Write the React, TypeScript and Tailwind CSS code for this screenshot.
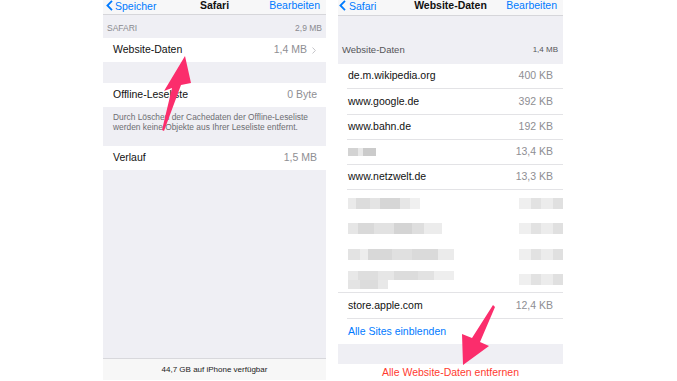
import React from "react";

const font = { fontFamily: '"Liberation Sans", Arial, sans-serif' };

type Block = [number, string];

function Chevron({ className }: { className?: string }) {
  return (
    <svg width="7" height="11" viewBox="0 0 7 11" className={className}>
      <polyline points="6,0.8 1.4,5.5 6,10.2" fill="none" stroke="#007aff" strokeWidth="1.8" />
    </svg>
  );
}

function Pixels({ blocks, h }: { blocks: Block[]; h: number }) {
  return (
    <div className="flex">
      {blocks.map(([w, c], i) => (
        <div key={i} style={{ width: w, height: h, background: c }} />
      ))}
    </div>
  );
}

function SafariPane() {
  return (
    <div className="flex h-[380px] w-[223px] flex-col bg-[#efeff4] text-[10.5px] text-[#111]">
      <div className="flex h-[15px] items-start justify-between border-b border-[#d6d6da] bg-[#f7f7f8] px-[3px] leading-[10px]">
        <div className="flex w-[70px] items-center gap-[2px] text-[#007aff]">
          <Chevron />
          <span>Speicher</span>
        </div>
        <span className="font-bold">Safari</span>
        <span className="w-[70px] pr-[3px] text-right text-[#007aff]">Bearbeiten</span>
      </div>

      <div className="flex h-[23px] items-end justify-between px-[4px] pb-[6px] text-[8.5px] leading-[8px] text-[#8a8a8f]">
        <span>SAFARI</span>
        <span>2,9 MB</span>
      </div>
      <div className="flex h-[24px] items-center justify-between bg-white pl-[10px] pr-[10px]">
        <span>Website-Daten</span>
        <span className="flex items-center gap-[5px] text-[#8e8e93]">
          1,4 MB
          <svg width="4" height="7" viewBox="0 0 4 7">
            <polyline points="0.5,0.5 3.4,3.5 0.5,6.5" fill="none" stroke="#c4c4c9" strokeWidth="1" />
          </svg>
        </span>
      </div>
      <div className="h-[21px]" />
      <div className="flex h-[24px] items-center justify-between bg-white pl-[10px] pr-[9px]">
        <span>Offline-Leseliste</span>
        <span className="text-[#8e8e93]">0 Byte</span>
      </div>
      <div className="h-[39px] px-[10px] pt-[5px] text-[8.4px] leading-[10px] text-[#6d6d72]">
        Durch Löschen der Cachedaten der Offline-Leseliste
        <br />
        werden keine Objekte aus Ihrer Leseliste entfernt.
      </div>
      <div className="flex h-[24px] items-center justify-between bg-white pl-[10px] pr-[9px]">
        <span>Verlauf</span>
        <span className="text-[#8e8e93]">1,5 MB</span>
      </div>
      <div className="flex-1" />
      <div className="flex h-[22px] items-center justify-center border-t border-[#d8d8dc] bg-[#f7f7f7] text-[8px] text-[#222]">
        44,7 GB auf iPhone verfügbar
      </div>
    </div>
  );
}

const sites: { name: string; size: string }[] = [
  { name: "de.m.wikipedia.org", size: "400 KB" },
  { name: "www.google.de", size: "392 KB" },
  { name: "www.bahn.de", size: "192 KB" },
  { name: "", size: "13,4 KB" },
  { name: "www.netzwelt.de", size: "13,3 KB" },
];

const blurLeft: Block[][] = [
  [[8, "#eaeaea"], [14, "#dcdcdc"], [10, "#e4e4e4"], [20, "#d6d6d6"], [10, "#e6e6e6"], [10, "#f0f0f0"]],
  [[10, "#e6e6e6"], [16, "#d9d9d9"], [20, "#e2e2e2"], [18, "#d4d4d4"], [12, "#dedede"], [18, "#ececec"]],
  [[12, "#e3e3e3"], [8, "#ededed"], [24, "#d8d8d8"], [20, "#e0e0e0"], [26, "#dadada"], [16, "#ebebeb"]],
  [[10, "#e8e8e8"], [20, "#dedede"], [16, "#e6e6e6"], [24, "#dcdcdc"], [16, "#e2e2e2"], [20, "#eeeeee"]],
];

const blurRight: Block[] = [[12, "#efefef"], [10, "#e2e2e2"], [12, "#ececec"], [10, "#e0e0e0"]];

function BlurRow({ left, double }: { left: Block[]; double?: boolean }) {
  return (
    <div className="flex h-[25.5px] items-center justify-between pl-[10px]">
      <div className="flex flex-col">
        <Pixels blocks={left} h={double ? 9 : 11} />
        {double && <Pixels blocks={[[12, "#e4e4e4"], [18, "#dcdcdc"], [10, "#e8e8e8"]]} h={9} />}
      </div>
      <Pixels blocks={blurRight} h={11} />
    </div>
  );
}

function WebsiteDataPane() {
  return (
    <div className="flex h-[381px] w-[225px] flex-col bg-white text-[10.5px] text-[#111]">
      <div className="flex h-[16px] items-start justify-between border-b border-[#d6d6da] bg-[#f7f7f8] px-[1px] leading-[10px]">
        <div className="flex w-[60px] items-center gap-[3px] text-[#007aff]">
          <Chevron />
          <span>Safari</span>
        </div>
        <span className="font-bold">Website-Daten</span>
        <span className="w-[60px] pr-[5px] text-right text-[#007aff]">Bearbeiten</span>
      </div>

      <div className="flex h-[48px] items-end justify-between bg-[#efeff4] pl-[4px] pr-[5px] pb-[10px] leading-[9px] text-[#555559]">
        <span className="text-[9.5px]">Website-Daten</span>
        <span className="text-[8px]">1,4 MB</span>
      </div>

      {sites.map((s, i) => (
        <div key={i} className="ml-[9px] flex h-[25.3px] items-center justify-between border-b border-[#e3e3e6] pl-[1px] pr-[10px]">
          {s.name ? (
            <span>{s.name}</span>
          ) : (
            <Pixels blocks={[[10, "#d3d3d3"], [5, "#e8e8e8"], [13, "#cbcbcb"]]} h={8} />
          )}
          <span className="text-[#8e8e93]">{s.size}</span>
        </div>
      ))}

      <div className="flex flex-col border-b border-[#e3e3e6]">
        {blurLeft.map((b, i) => (
          <BlurRow key={i} left={b} double={i === 3} />
        ))}
      </div>

      <div className="ml-[9px] flex h-[25.3px] items-center justify-between border-b border-[#e3e3e6] pl-[1px] pr-[10px]">
        <span>store.apple.com</span>
        <span className="text-[#8e8e93]">12,4 KB</span>
      </div>
      <div className="flex h-[25.3px] items-center pl-[10px] text-[#007aff]">Alle Sites einblenden</div>
      <div className="h-[20px] bg-[#efeff4]" />
      <div className="flex flex-1 items-center justify-center text-[#ff3b30]">Alle Website-Daten entfernen</div>
    </div>
  );
}

export default function App() {
  return (
    <div className="relative h-[381px] w-[677px] overflow-hidden bg-white" style={font}>
      <div className="flex gap-[12px] pl-[103px]">
        <SafariPane />
        <WebsiteDataPane />
      </div>

      {/* annotation arrows */}
      <svg className="pointer-events-none absolute left-0 top-0" width="677" height="381" viewBox="0 0 677 381">
        <polygon points="185,56 191,83 181,85 164,131 162,130 172,88 164,91" fill="#fb2d6c" />
        <polygon points="463,365 462,334 472,338 493,305 495,307 480,342 489,346" fill="#fb2d6c" />
      </svg>
    </div>
  );
}
